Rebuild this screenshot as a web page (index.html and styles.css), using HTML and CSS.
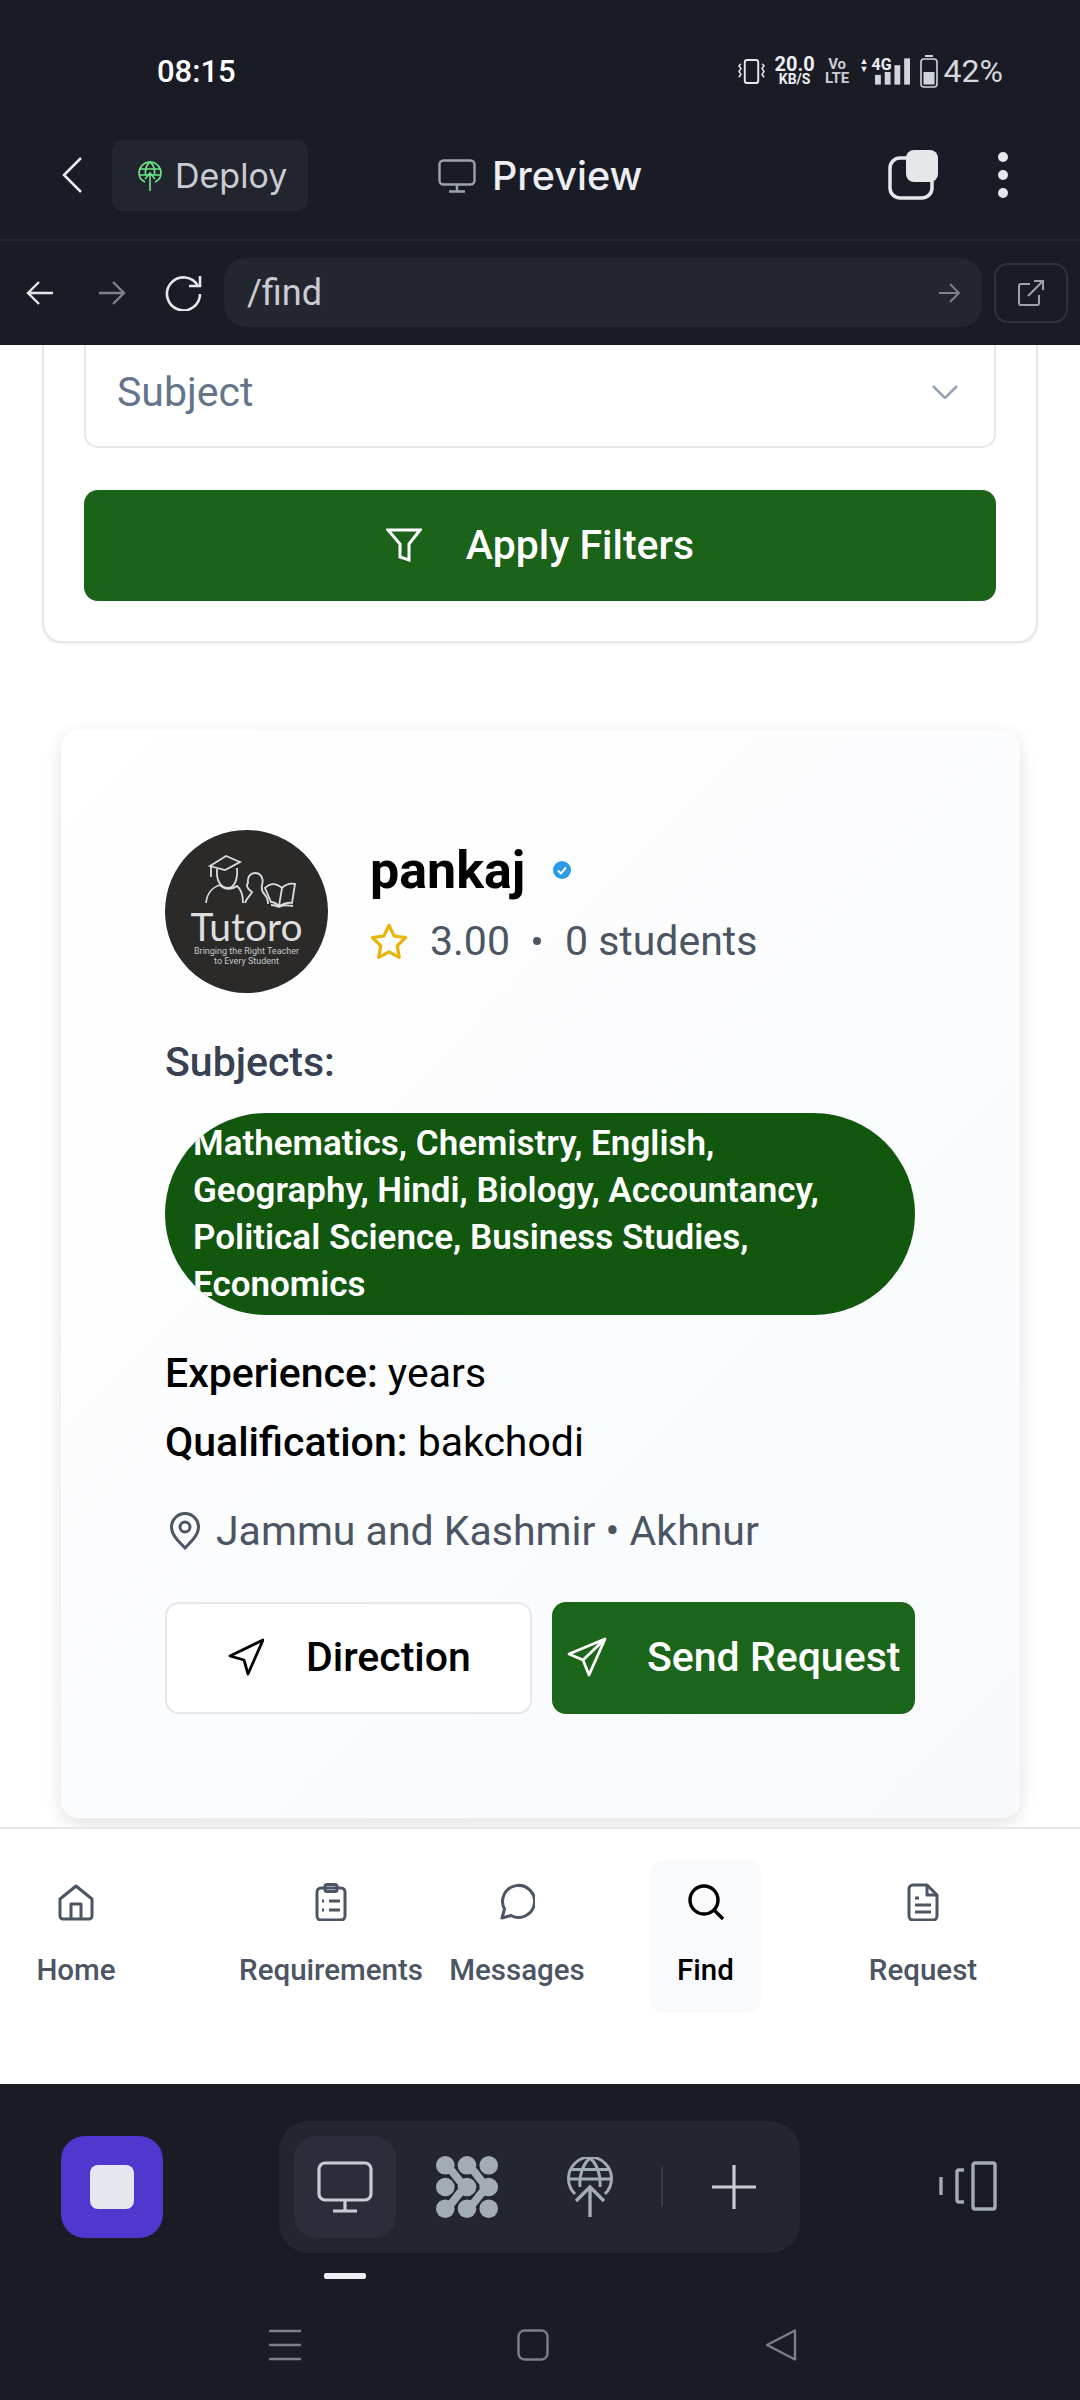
FILE: index.html
```html
<!DOCTYPE html>
<html lang="en">
<head>
    <meta charset="UTF-8">
    <meta name="viewport" content="width=device-width, initial-scale=1.0">
    <title>Find - Preview</title>
    <link rel="stylesheet" href="styles.css">
</head>
<body>
    <header class="top-shell">
        <div class="status-bar">
            <span class="status-time">08:15</span>
            <div class="status-icons">
                <svg class="icon-vibrate" viewBox="0 0 28 26" fill="none" stroke="#e5e7eb" stroke-width="2"><rect x="7" y="1" width="14" height="24" rx="2.5"/><path d="M3 5l-2 2 2 3-2 3 2 3-2 3M25 5l2 2-2 3 2 3-2 3 2 3" stroke-width="1.6"/></svg>
                <div class="net-speed"><span>20.0</span><span class="net-unit">KB/S</span></div>
                <div class="volte"><span>Vo</span><span>LTE</span></div>
                <div class="signal">
                    <span class="signal-label"><i class="arrows">&#9650;<br>&#9660;</i>4G</span>
                    <svg class="signal-bars" viewBox="0 0 36 27" fill="#d1d5db"><rect x="0" y="17" width="6" height="10"/><rect x="10" y="14" width="6" height="13"/><rect x="20" y="7" width="6" height="20"/><rect x="30" y="0" width="6" height="27"/></svg>
                </div>
                <svg class="icon-battery" viewBox="0 0 18 33" fill="none"><rect x="5" y="0" width="8" height="2" fill="#d1d5db"/><rect x="1" y="4" width="16" height="28" rx="3" stroke="#d1d5db" stroke-width="1.6"/><rect x="3.5" y="17" width="11" height="12.5" fill="#d1d5db"/></svg>
                <span class="battery-text">42%</span>
            </div>
        </div>

        <div class="title-bar">
            <svg class="icon-back" viewBox="0 0 20 36" fill="none" stroke="#e5e7eb" stroke-width="2.6"><path d="M19 1L2 18l17 17"/></svg>
            <div class="deploy-chip">
                <svg viewBox="0 0 24 30" width="24" height="30" fill="none" stroke="#6ee78a" stroke-width="1.6"><path d="M7 21C2.500 19 1 15.500 1 12a11 11 0 0 1 22 0c0 3.500-1.500 7-6 9"/><path d="M1.500 8h21M1.500 14h21M12 1c-4 3-5 7-4.500 13M12 1c4 3 5 7 4.500 13"/><path d="M12 30V12M7 18l5-6 5 6"/></svg>
                <span>Deploy</span>
            </div>
            <div class="preview-title">
                <svg viewBox="0 0 38 34" width="38" height="34" fill="none" stroke="#9ca3af" stroke-width="2.400"><rect x="1.500" y="1.500" width="35" height="24" rx="4"/><path d="M19 26v6M11 32.500h16"/></svg>
                <span>Preview</span>
            </div>
            <svg class="icon-tabs" viewBox="0 0 50 50" fill="none"><rect x="2" y="8" width="42" height="40" rx="10" stroke="#e5e7eb" stroke-width="3.500"/><rect x="18" y="0" width="32" height="32" rx="8" fill="#e5e7eb"/></svg>
            <div class="dots"><i></i><i></i><i></i></div>
        </div>

        <div class="url-bar">
            <svg class="nav-arrow" viewBox="0 0 28 26" fill="none" stroke="#e5e7eb" stroke-width="2.400"><path d="M27 13H2M13 2L2 13l11 11"/></svg>
            <svg class="nav-arrow" viewBox="0 0 28 26" fill="none" stroke="#7d828c" stroke-width="2.400"><path d="M1 13h25M15 2l11 11-11 11"/></svg>
            <svg class="icon-reload" viewBox="0 0 38 36" fill="none" stroke="#e5e7eb" stroke-width="2.600"><path d="M33 11A16.500 16.500 0 1 0 35 19"/><path d="M35 1v10H24"/></svg>
            <div class="url-field">
                <span>/find</span>
                <svg viewBox="0 0 22 22" width="22" height="22" fill="none" stroke="#7d828c" stroke-width="1.800"><path d="M1 11h19M12 2l9 9-9 9"/></svg>
            </div>
            <div class="open-box">
                <svg viewBox="0 0 26 26" width="26" height="26" fill="none" stroke="#9ca3af" stroke-width="2"><path d="M12 4H3a2 2 0 0 0-2 2v17a2 2 0 0 0 2 2h16a2 2 0 0 0 2-2v-8M10 16L25 1M16 1h9v9"/></svg>
            </div>
        </div>
    </header>

    <main class="content">
        <section class="filter-card">
            <div class="select-box">
                <span>Subject</span>
                <svg viewBox="0 0 26 14" width="26" height="14" fill="none" stroke="#94a3b8" stroke-width="2.600"><path d="M1 1l12 12L25 1"/></svg>
            </div>
            <button class="btn-apply">
                <svg viewBox="0 0 36 34" width="36" height="34" fill="none" stroke="#fff" stroke-width="3"><path d="M2 2h32L23 16v16l-9-3V16z"/></svg>
                <span>Apply Filters</span>
            </button>
        </section>

        <section class="tutor-card">
            <div class="tutor-head">
                <div class="avatar">
                    <svg class="avatar-art" viewBox="0 0 120 66" fill="none" stroke="#dcdcdc" stroke-width="1.800">
                        <path d="M23 21L39 11l14 6-15 8zM24 21v11"/>
                        <path d="M30 24c-1 12 4 19 11 19 6 0 10-8 9-20"/>
                        <path d="M19 58c1-10 7-16 14-18 5 5 12 5 17 1 4 3 6 9 6 17"/>
                        <path d="M58 58c2-6 6-8 7-11-5-3-6-7-4-9-1-7 3-10 7-10 6 0 9 6 7 12-1 5 1 8 3 10s3 6 3 9"/>
                        <path d="M78 43c4-4 10-6 17 0 4-4 8-5 13-4l-3 19c-4-1-7 0-13 3-3-3-5-4-8-4zM95 43l-3 18M84 60c4 0 6 1 8 2 4-2 8-2 14-1"/>
                    </svg>
                    <span class="avatar-name">Tutoro</span>
                    <span class="avatar-tag">Bringing the Right Teacher<br>to Every Student</span>
                </div>
                <div class="tutor-info">
                    <div class="tutor-name">
                        <span>pankaj</span>
                        <svg viewBox="0 0 18 18" width="18" height="18"><circle cx="9" cy="9" r="9" fill="#2b9ae8"/><path d="M5 9.500l3 3 5-6" fill="none" stroke="#fff" stroke-width="2"/></svg>
                    </div>
                    <div class="tutor-rating">
                        <svg viewBox="0 0 40 38" width="38" height="36" fill="none" stroke="#eab308" stroke-width="3.400" stroke-linejoin="round"><path d="M20 2.500l5.400 11.200 12.100 1.700-8.800 8.600 2.100 12.200L20 30.400 9.200 36.200l2.100-12.200-8.800-8.600 12.100-1.700z"/></svg>
                        <span class="rating-value">3.00</span>
                        <i class="rating-dot"></i>
                        <span>0 students</span>
                    </div>
                </div>
            </div>

            <h3 class="subjects-label">Subjects:</h3>
            <div class="subjects-pill">Mathematics, Chemistry, English, Geography, Hindi, Biology, Accountancy, Political Science, Business Studies, Economics</div>

            <p class="detail experience"><b>Experience:</b> years</p>
            <p class="detail qualification"><b>Qualification:</b> bakchodi</p>

            <div class="location">
                <svg viewBox="0 0 32 38" width="32" height="38" fill="none" stroke="#4b5563" stroke-width="3"><path d="M16 36C9 29 2.500 22.500 2.500 15a13.500 13.500 0 0 1 27 0C29.500 22.500 23 29 16 36z"/><circle cx="16" cy="15" r="5"/></svg>
                <span>Jammu and Kashmir &bull; Akhnur</span>
            </div>

            <div class="tutor-actions">
                <button class="btn-direction">
                    <svg viewBox="0 0 36 38" width="36" height="38" fill="none" stroke="#000" stroke-width="2.800" stroke-linejoin="round"><path d="M35 2L2 18l14 4 4 14z"/></svg>
                    <span>Direction</span>
                </button>
                <button class="btn-request">
                    <svg viewBox="0 0 40 40" width="40" height="40" fill="none" stroke="#fff" stroke-width="2.800" stroke-linejoin="round"><path d="M38 2L2 17l14 6 6 15zM38 2L16 23"/></svg>
                    <span>Send Request</span>
                </button>
            </div>
        </section>
    </main>

    <nav class="bottom-nav">
        <div class="nav-item nav-home">
            <svg viewBox="0 0 36 36" fill="none" stroke="#4b5563" stroke-width="3" stroke-linejoin="round"><path d="M2 15L18 2l16 13v17a3 3 0 0 1-3 3H5a3 3 0 0 1-3-3z"/><path d="M13 35V20h10v15"/></svg>
            <span>Home</span>
        </div>
        <div class="nav-item nav-req">
            <svg viewBox="0 0 32 38" fill="none" stroke="#4b5563" stroke-width="3"><rect x="2" y="5" width="28" height="32" rx="4"/><rect x="10" y="1.500" width="12" height="7" rx="2"/><path d="M14 18h11M14 27h11M7 18h2M7 27h2"/></svg>
            <span>Requirements</span>
        </div>
        <div class="nav-item nav-msg">
            <svg viewBox="0 0 36 36" fill="none" stroke="#4b5563" stroke-width="3" stroke-linejoin="round"><path d="M3 34l2.500-9A16 16 0 1 1 12 31.500z"/></svg>
            <span>Messages</span>
        </div>
        <div class="nav-item nav-find active">
            <svg viewBox="0 0 36 36" fill="none" stroke="#000" stroke-width="3.400"><circle cx="16" cy="16" r="14"/><path d="M26 26l9 9"/></svg>
            <span>Find</span>
        </div>
        <div class="nav-item nav-request">
            <svg viewBox="0 0 32 38" fill="none" stroke="#4b5563" stroke-width="3" stroke-linejoin="round"><path d="M20 2H6a4 4 0 0 0-4 4v27a4 4 0 0 0 4 4h20a4 4 0 0 0 4-4V12z"/><path d="M20 2v10h10M8 15h4M8 22h16M8 29h16"/></svg>
            <span>Request</span>
        </div>
    </nav>

    <footer class="tool-shell">
        <div class="tool-row">
            <div class="stop-btn"><i></i></div>
            <div class="tool-group">
                <div class="tool active">
                    <svg viewBox="0 0 56 52" width="56" height="52" fill="none" stroke="#c9ccd2" stroke-width="3.200"><rect x="2" y="2" width="52" height="37" rx="6"/><path d="M28 39v10M16 50h24"/></svg>
                </div>
                <div class="tool">
                    <svg viewBox="0 0 62 62" width="62" height="62" fill="#a3abb5"><circle cx="9.300" cy="9.300" r="9.300"/><circle cx="31" cy="9.300" r="9.300"/><circle cx="52.700" cy="9.300" r="9.300"/><circle cx="9.300" cy="31" r="9.300"/><circle cx="31" cy="31" r="9.300"/><circle cx="52.700" cy="31" r="9.300"/><circle cx="9.300" cy="52.700" r="9.300"/><circle cx="31" cy="52.700" r="9.300"/><circle cx="52.700" cy="52.700" r="9.300"/><path d="M9.300 9.300C18 14 22 27 31 31M31 9.300C40 14 44 27 52.700 31M31 31C22 35 18 48 9.300 52.700M52.700 31C44 35 40 48 31 52.700" fill="none" stroke="#a3abb5" stroke-width="8"/></svg>
                </div>
                <div class="tool">
                    <svg viewBox="0 0 46 60" width="46" height="60" fill="none" stroke="#a3abb5" stroke-width="3"><path d="M8 37A21.500 21.500 0 1 1 38 37"/><path d="M1 22h44M4 12.500h38M23 1c-7 6-11 17-10 29M23 1c7 6 11 17 10 29"/><path d="M23 60V30M9 44l14-14 14 14" stroke-width="3.400"/></svg>
                </div>
                <i class="tool-sep"></i>
                <svg class="tool-plus" viewBox="0 0 46 46" width="46" height="46" fill="none" stroke="#c9ccd2" stroke-width="3.200"><path d="M23 1v44M1 23h44"/></svg>
            </div>
            <svg class="icon-devices" viewBox="0 0 58 50" width="58" height="50" fill="none" stroke="#a3abb5" stroke-width="3.400"><rect x="34" y="2" width="22" height="46" rx="2"/><path d="M25 9h-5a2 2 0 0 0-2 2v28a2 2 0 0 0 2 2h5M2 16v18"/></svg>
        </div>
        <div class="tool-indicator"></div>
        <div class="system-nav">
            <svg viewBox="0 0 32 32" width="32" height="32" fill="none" stroke="#7b7f87" stroke-width="2.600"><path d="M0 2h32M0 16h32M0 30h32"/></svg>
            <svg viewBox="0 0 32 32" width="32" height="32" fill="none" stroke="#7b7f87" stroke-width="2.400"><rect x="1.500" y="1.500" width="29" height="29" rx="6"/></svg>
            <svg viewBox="0 0 32 32" width="32" height="32" fill="none" stroke="#7b7f87" stroke-width="2.400" stroke-linejoin="round"><path d="M30 1.500v29L2 16z"/></svg>
        </div>
    </footer>
</body>
</html>
```

FILE: styles.css
```css
* {
    box-sizing: border-box;
}

html, body {
    margin: 0;
    padding: 0;
}

body {
    width: 1080px;
    height: 2400px;
    overflow: hidden;
    display: flex;
    flex-direction: column;
    background-color: #fff;
    font-family: Roboto, "Liberation Sans", sans-serif;
    color: #000;
}

svg {
    display: block;
    flex-shrink: 0;
}

/* top dark shell */
.top-shell {
    height: 345px;
    flex-shrink: 0;
    background-color: #191c25;
    color: #e5e7eb;
    font-family: Inter, "Liberation Sans", sans-serif;
    display: flex;
    flex-direction: column;
}

.status-bar {
    height: 140px;
    display: flex;
    justify-content: space-between;
    align-items: center;
    padding: 2px 77px 0 157px;
    flex-shrink: 0;
}

.status-time {
    font-family: Roboto, sans-serif;
    font-size: 31px;
    font-weight: 500;
    color: #fff;
}

.status-icons {
    display: flex;
    align-items: center;
    font-family: Roboto, sans-serif;
    color: #eceef1;
}

.icon-vibrate {
    width: 27px;
    height: 25px;
    margin-right: 9px;
}

.net-speed {
    display: flex;
    flex-direction: column;
    align-items: center;
    font-size: 20px;
    line-height: 17px;
    font-weight: 700;
    width: 42px;
    margin-right: 12px;
}

.net-unit {
    font-size: 14px;
    line-height: 13px;
}

.volte {
    display: flex;
    flex-direction: column;
    align-items: center;
    width: 19px;
    font-size: 15px;
    line-height: 14px;
    font-weight: 700;
    color: #c9ccd2;
    margin-right: 13px;
}

.signal {
    position: relative;
    width: 50px;
    height: 30px;
    margin-right: 10px;
}

.signal-label {
    position: absolute;
    left: 0;
    top: 0;
    display: flex;
    align-items: flex-start;
    font-size: 16px;
    line-height: 17px;
    font-weight: 700;
}

.arrows {
    font-style: normal;
    font-size: 9px;
    line-height: 8px;
    margin: 1px 3px 0 0;
}

.signal-bars {
    position: absolute;
    right: 0;
    bottom: 1px;
    width: 35px;
    height: 27px;
}

.icon-battery {
    width: 18px;
    height: 33px;
    margin-right: 6px;
}

.battery-text {
    font-size: 32px;
    font-weight: 400;
    color: #d6d8dc;
}

.title-bar {
    height: 101px;
    flex-shrink: 0;
    display: flex;
    align-items: flex-start;
    padding-left: 62px;
    border-bottom: 2px solid #242732;
}

.icon-back {
    width: 20px;
    height: 36px;
    margin-top: 17px;
}

.deploy-chip {
    width: 196px;
    height: 71px;
    margin-left: 30px;
    background-color: #22252e;
    border-radius: 10px;
    display: flex;
    align-items: center;
    gap: 13px;
    padding-left: 26px;
    font-size: 34px;
    color: #c9ccd2;
}

.preview-title {
    display: flex;
    align-items: center;
    gap: 16px;
    margin-left: 130px;
    height: 71px;
    font-size: 39.5px;
    font-weight: 500;
    color: #eceef1;
}

.icon-tabs {
    width: 50px;
    height: 50px;
    margin: 10px 0 0 246px;
}

.dots {
    display: flex;
    flex-direction: column;
    gap: 8px;
    margin: 12px 0 0 60px;
}

.dots i {
    display: block;
    width: 10px;
    height: 10px;
    border-radius: 50%;
    background-color: #e5e7eb;
}

.url-bar {
    display: flex;
    align-items: center;
    padding: 17px 12px 0 26px;
}

.nav-arrow {
    width: 28px;
    height: 26px;
    margin-right: 44px;
}

.icon-reload {
    width: 38px;
    height: 36px;
    margin: 0 21px 0 -5px;
}

.url-field {
    width: 758px;
    height: 69px;
    border-radius: 22px;
    background-color: #23262f;
    display: flex;
    align-items: center;
    justify-content: space-between;
    padding: 0 22px 0 23px;
    font-family: Roboto, sans-serif;
    font-size: 36px;
    color: #c9ccd2;
}

.open-box {
    width: 74px;
    height: 60px;
    margin-left: 12px;
    border: 2px solid #2f323b;
    border-radius: 14px;
    display: flex;
    align-items: center;
    justify-content: center;
}

/* page content */
.content {
    height: 1482px;
    flex-shrink: 0;
    overflow: hidden;
    background-color: #fff;
}

.filter-card {
    width: 996px;
    margin: -40px 0 0 42px;
    padding: 0 40px 40px;
    background-color: #fff;
    border: 2px solid #e5e7eb;
    border-radius: 20px;
    box-shadow: 0 1px 3px rgba(0, 0, 0, 0.08);
}

.select-box {
    height: 141px;
    padding: 29px 36px 0 31px;
    border: 2px solid #e5e7eb;
    border-radius: 14px;
    display: flex;
    align-items: center;
    justify-content: space-between;
    font-size: 41px;
    color: #64748b;
}

.btn-apply {
    width: 100%;
    height: 111px;
    margin-top: 42px;
    padding: 0 0 2px;
    border: none;
    border-radius: 14px;
    background-color: #1b6318;
    color: #fff;
    font-family: Roboto, sans-serif;
    font-size: 41px;
    font-weight: 500;
    display: flex;
    align-items: center;
    justify-content: center;
    gap: 44px;
}

.tutor-card {
    width: 959px;
    height: 1088px;
    margin: 87px 0 0 61px;
    padding: 100px 105px 0 104px;
    border-radius: 18px;
    background: linear-gradient(135deg, #fff, #f7f9fc);
    box-shadow: 0 6px 18px rgba(0, 0, 0, 0.12);
}

.tutor-head {
    display: flex;
    align-items: flex-start;
    gap: 42px;
}

.avatar {
    width: 163px;
    height: 163px;
    border-radius: 50%;
    background-color: #2b2a29;
    display: flex;
    flex-direction: column;
    align-items: center;
    padding-top: 15px;
    color: #dedede;
    flex-shrink: 0;
}

.avatar-art {
    width: 120px;
    height: 66px;
}

.avatar-name {
    font-family: Lato, sans-serif;
    font-size: 39px;
    line-height: 30px;
    margin-top: 0;
}

.avatar-tag {
    font-size: 9px;
    line-height: 10px;
    text-align: center;
    margin-top: 5px;
    color: #c8c8c8;
}

.tutor-name {
    display: flex;
    align-items: center;
    gap: 28px;
    height: 60px;
    margin-top: 10px;
    font-size: 52px;
    font-weight: 700;
}

.tutor-rating {
    display: flex;
    align-items: center;
    height: 50px;
    margin-top: 16px;
    font-size: 41px;
    color: #4b5563;
}

.rating-value {
    margin-left: 22px;
}

.rating-dot {
    width: 8px;
    height: 8px;
    margin: 0 24px 0 23px;
    border-radius: 50%;
    background-color: #4b5563;
}

.subjects-label {
    margin: 46px 0 0;
    font-size: 41px;
    line-height: 46px;
    font-weight: 500;
    color: #374151;
}

.subjects-pill {
    width: 750px;
    height: 202px;
    margin-top: 28px;
    padding: 7px 28px 0;
    overflow: hidden;
    border-radius: 101px;
    background-color: #11570e;
    color: #fff;
    font-size: 35px;
    line-height: 47px;
    font-weight: 600;
}

.detail {
    margin: 0;
    font-size: 41px;
    line-height: 48px;
}

.detail b {
    font-weight: 500;
}

.experience {
    margin-top: 34px;
}

.qualification {
    margin-top: 21px;
}

.location {
    display: flex;
    align-items: center;
    gap: 15px;
    height: 50px;
    margin: 40px 0 0 4px;
    font-size: 41px;
    color: #4b5563;
}

.tutor-actions {
    display: flex;
    gap: 20px;
    margin-top: 46px;
}

.tutor-actions button {
    height: 112px;
    border-radius: 14px;
    font-family: Roboto, sans-serif;
    font-size: 41px;
    font-weight: 500;
    display: flex;
    align-items: center;
}

.btn-direction {
    width: 367px;
    background-color: #fff;
    border: 2px solid #e5e7eb;
    color: #000;
    gap: 42px;
    padding: 0 0 2px 61px;
}

.btn-request {
    width: 363px;
    background-color: #1c661b;
    border: none;
    color: #fff;
    gap: 40px;
    padding: 0 0 2px 15px;
}

/* bottom tabs */
.bottom-nav {
    height: 257px;
    flex-shrink: 0;
    display: flex;
    align-items: flex-start;
    background-color: #fff;
    border-top: 2px solid #e5e7eb;
    padding-top: 31px;
}

.nav-item {
    height: 153px;
    display: flex;
    flex-direction: column;
    align-items: center;
    gap: 32px;
    padding-top: 23px;
    font-size: 29.5px;
    font-weight: 500;
    color: #4b5563;
    white-space: nowrap;
}

.nav-item svg {
    height: 38px;
    width: 36px;
}

.nav-home {
    margin-left: 37px;
    width: 78px;
}

.nav-req {
    margin-left: 125px;
    width: 182px;
}

.nav-msg {
    margin-left: 28px;
    width: 134px;
}

.nav-find {
    margin-left: 66px;
    width: 111px;
    border-radius: 14px;
    background-color: #f8fafc;
}

.nav-find.active {
    color: #000;
}

.nav-request {
    margin-left: 108px;
    width: 108px;
}

/* bottom dark shell */
.tool-shell {
    flex: 1;
    background-color: #191c25;
    display: flex;
    flex-direction: column;
}

.tool-row {
    height: 170px;
    padding-top: 37px;
    display: flex;
    align-items: flex-start;
    flex-shrink: 0;
}

.stop-btn {
    width: 102px;
    height: 102px;
    margin: 15px 0 0 61px;
    border-radius: 24px;
    background-color: #5237cf;
    display: flex;
    align-items: center;
    justify-content: center;
}

.stop-btn i {
    width: 44px;
    height: 44px;
    border-radius: 8px;
    background-color: #e6e7ee;
}

.tool-group {
    width: 521px;
    height: 132px;
    margin-left: 116px;
    padding-left: 15px;
    border-radius: 30px;
    background-color: #23262f;
    display: flex;
    align-items: center;
}

.tool {
    width: 102px;
    height: 102px;
    margin-right: 15px;
    border-radius: 22px;
    display: flex;
    align-items: center;
    justify-content: center;
}

.tool.active {
    background-color: #2b2e3a;
    margin-right: 40px;
}

.tool + .tool {
    width: 62px;
    margin-right: 69px;
}

.tool + .tool + .tool {
    width: 46px;
    margin-right: 48px;
}

.tool-sep {
    width: 2px;
    height: 40px;
    background-color: #363944;
}

.tool-plus {
    margin-left: 48px;
}

.icon-devices {
    margin: 40px 0 0 139px;
}

.tool-indicator {
    width: 42px;
    height: 6px;
    margin: 19px 0 0 324px;
    border-radius: 2px;
    background-color: #eceef1;
    flex-shrink: 0;
}

.system-nav {
    display: flex;
    margin-top: 50px;
    padding-left: 269px;
    gap: 216px;
}
```
